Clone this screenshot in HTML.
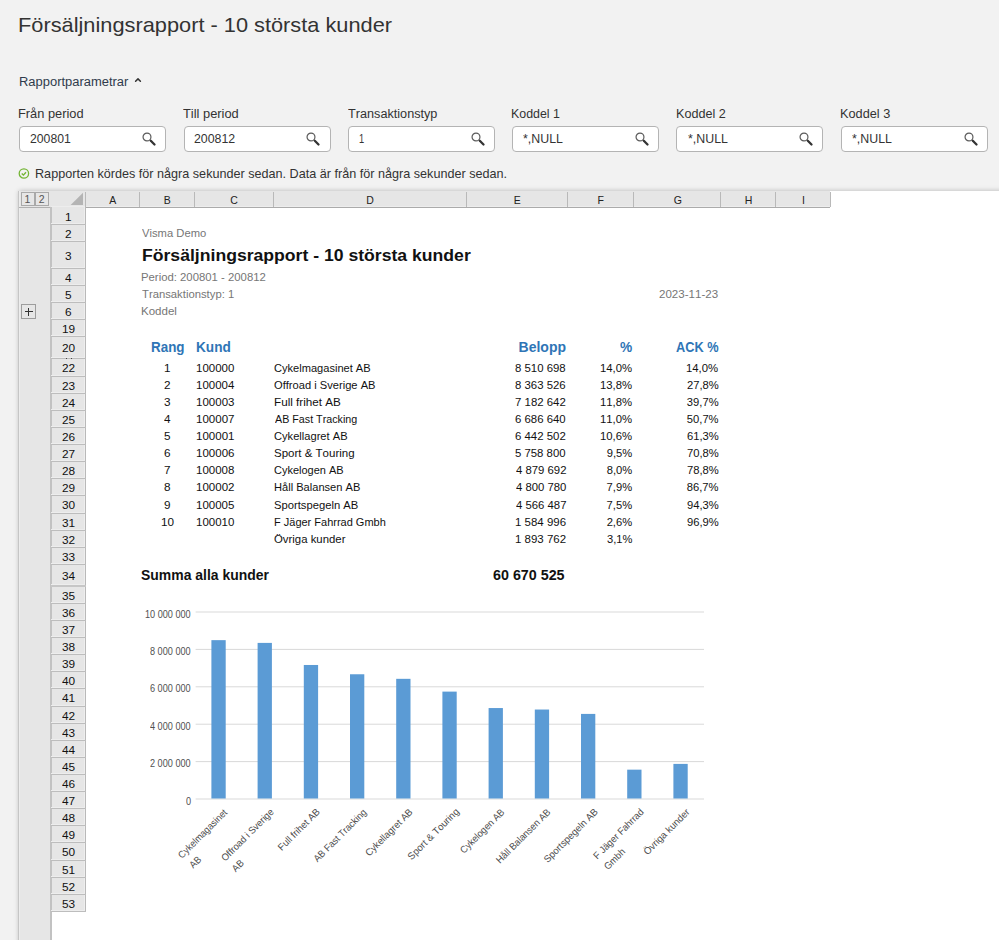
<!DOCTYPE html>
<html><head><meta charset="utf-8"><title>Försäljningsrapport</title>
<style>
html,body{margin:0;padding:0}
body{width:999px;height:940px;position:relative;overflow:hidden;background:#f2f2f2;font-family:"Liberation Sans",sans-serif;font-kerning:none}
.t{position:absolute;white-space:nowrap;line-height:0;transform-origin:0 0}
.r{position:absolute}
</style></head><body>
<div class="t" style="left:18.21px;top:25px;font-size:20.8px;color:#333;transform:scaleX(1.0473);">Försäljningsrapport - 10 största kunder</div>
<div class="t" style="left:18.64px;top:82px;font-size:12.5px;color:#2f3b4c;transform:scaleX(1.0357);">Rapportparametrar</div>
<svg class="r" style="left:133px;top:75px" width="12" height="10"><path d="M2.6 6.3 L5 3.9 L7.4 6.3" fill="none" stroke="#333" stroke-width="1.5" stroke-linecap="round" stroke-linejoin="round"/></svg>
<div class="t" style="left:18.25px;top:114px;font-size:12.5px;color:#333;transform:scaleX(1.0259);">Från period</div>
<div class="r" style="left:19.30px;top:126.00px;width:147.00px;height:25.50px;background:#fff;border:1px solid #b4b4b4;border-radius:4px;box-sizing:border-box;"></div>
<div class="t" style="left:29.98px;top:139px;font-size:12.6px;color:#333;transform:scaleX(0.9707);">200801</div>
<svg class="r" style="left:141.10px;top:130.90px" width="16" height="16"><circle cx="6" cy="6" r="3.95" fill="none" stroke="#5a5a5a" stroke-width="1.2"/><path d="M9.8 9.8 L13.5 13.5" stroke="#333" stroke-width="2.3" stroke-linecap="round"/></svg>
<div class="t" style="left:183.21px;top:114px;font-size:12.5px;color:#333;transform:scaleX(1.0282);">Till period</div>
<div class="r" style="left:183.58px;top:126.00px;width:147.00px;height:25.50px;background:#fff;border:1px solid #b4b4b4;border-radius:4px;box-sizing:border-box;"></div>
<div class="t" style="left:194.26px;top:139px;font-size:12.6px;color:#333;transform:scaleX(0.9809);">200812</div>
<svg class="r" style="left:305.38px;top:130.90px" width="16" height="16"><circle cx="6" cy="6" r="3.95" fill="none" stroke="#5a5a5a" stroke-width="1.2"/><path d="M9.8 9.8 L13.5 13.5" stroke="#333" stroke-width="2.3" stroke-linecap="round"/></svg>
<div class="t" style="left:347.92px;top:114px;font-size:12.5px;color:#333;transform:scaleX(1.0134);">Transaktionstyp</div>
<div class="r" style="left:347.86px;top:126.00px;width:147.00px;height:25.50px;background:#fff;border:1px solid #b4b4b4;border-radius:4px;box-sizing:border-box;"></div>
<div class="t" style="left:359.35px;top:139px;font-size:12.6px;color:#333;transform:scaleX(0.7363);">1</div>
<svg class="r" style="left:469.66px;top:130.90px" width="16" height="16"><circle cx="6" cy="6" r="3.95" fill="none" stroke="#5a5a5a" stroke-width="1.2"/><path d="M9.8 9.8 L13.5 13.5" stroke="#333" stroke-width="2.3" stroke-linecap="round"/></svg>
<div class="t" style="left:511.48px;top:114px;font-size:12.5px;color:#333;transform:scaleX(0.9914);">Koddel 1</div>
<div class="r" style="left:512.14px;top:126.00px;width:147.00px;height:25.50px;background:#fff;border:1px solid #b4b4b4;border-radius:4px;box-sizing:border-box;"></div>
<div class="t" style="left:523.24px;top:139px;font-size:12.6px;color:#333;transform:scaleX(0.9826);">*,NULL</div>
<svg class="r" style="left:633.94px;top:130.90px" width="16" height="16"><circle cx="6" cy="6" r="3.95" fill="none" stroke="#5a5a5a" stroke-width="1.2"/><path d="M9.8 9.8 L13.5 13.5" stroke="#333" stroke-width="2.3" stroke-linecap="round"/></svg>
<div class="t" style="left:675.67px;top:114px;font-size:12.5px;color:#333;transform:scaleX(1.0085);">Koddel 2</div>
<div class="r" style="left:676.42px;top:126.00px;width:147.00px;height:25.50px;background:#fff;border:1px solid #b4b4b4;border-radius:4px;box-sizing:border-box;"></div>
<div class="t" style="left:687.52px;top:139px;font-size:12.6px;color:#333;transform:scaleX(0.9826);">*,NULL</div>
<svg class="r" style="left:798.22px;top:130.90px" width="16" height="16"><circle cx="6" cy="6" r="3.95" fill="none" stroke="#5a5a5a" stroke-width="1.2"/><path d="M9.8 9.8 L13.5 13.5" stroke="#333" stroke-width="2.3" stroke-linecap="round"/></svg>
<div class="t" style="left:839.96px;top:114px;font-size:12.5px;color:#333;transform:scaleX(1.0173);">Koddel 3</div>
<div class="r" style="left:840.70px;top:126.00px;width:147.00px;height:25.50px;background:#fff;border:1px solid #b4b4b4;border-radius:4px;box-sizing:border-box;"></div>
<div class="t" style="left:851.80px;top:139px;font-size:12.6px;color:#333;transform:scaleX(0.9826);">*,NULL</div>
<svg class="r" style="left:962.50px;top:130.90px" width="16" height="16"><circle cx="6" cy="6" r="3.95" fill="none" stroke="#5a5a5a" stroke-width="1.2"/><path d="M9.8 9.8 L13.5 13.5" stroke="#333" stroke-width="2.3" stroke-linecap="round"/></svg>
<svg class="r" style="left:17px;top:167px" width="14" height="14"><circle cx="6.9" cy="6.5" r="4.7" fill="none" stroke="#74b535" stroke-width="1.3"/><path d="M4.7 6.6 L6.4 8.1 L9 5.2" fill="none" stroke="#74b535" stroke-width="1.4"/></svg>
<div class="t" style="left:35.26px;top:174px;font-size:12.8px;color:#333;transform:scaleX(0.9860);">Rapporten kördes för några sekunder sedan. Data är från för några sekunder sedan.</div>
<div class="r" style="left:19.00px;top:191.00px;width:991.00px;height:769.00px;background:#fff;box-shadow:0 0 5px rgba(0,0,0,0.25);"></div>
<div class="r" style="left:18.00px;top:191.00px;width:33.00px;height:769.00px;background:#e6e6e6;border-left:1px solid #c6c6c6;box-sizing:border-box;"></div>
<div class="r" style="left:19.00px;top:191.00px;width:1.00px;height:769.00px;background:#ededed;"></div>
<div class="r" style="left:20.50px;top:192.00px;width:14.00px;height:14.00px;background:#e6e6e6;border:1px solid #a9a9a9;box-sizing:border-box;"></div>
<div class="r" style="left:34.50px;top:192.00px;width:14.00px;height:14.00px;background:#e6e6e6;border:1px solid #a9a9a9;box-sizing:border-box;"></div>
<div class="t" style="left:24.54px;top:199px;font-size:10.5px;color:#555;">1</div>
<div class="t" style="left:38.68px;top:199px;font-size:10.5px;color:#555;">2</div>
<div class="r" style="left:19.00px;top:206.50px;width:32.00px;height:1.00px;background:#b0b0b0;"></div>
<div class="r" style="left:21.00px;top:304.00px;width:15.00px;height:15.00px;background:#e6e6e6;border:1px solid #9d9d9d;box-sizing:border-box;"></div>
<div class="r" style="left:24.50px;top:311.00px;width:8.00px;height:1.20px;background:#333;"></div>
<div class="r" style="left:27.90px;top:307.50px;width:1.20px;height:8.00px;background:#333;"></div>
<div class="r" style="left:51.00px;top:191.00px;width:779.00px;height:16.00px;background:#e6e6e6;"></div>
<div class="r" style="left:51.00px;top:206.00px;width:779.00px;height:1.00px;background:#ededed;"></div>
<div class="r" style="left:51.00px;top:207.00px;width:779.00px;height:1.00px;background:#ababab;"></div>
<div class="r" style="left:84.50px;top:192.00px;width:1.00px;height:15.00px;background:#b9b9b9;"></div>
<div class="r" style="left:139.00px;top:192.00px;width:1.00px;height:15.00px;background:#b9b9b9;"></div>
<div class="r" style="left:193.50px;top:192.00px;width:1.00px;height:15.00px;background:#b9b9b9;"></div>
<div class="r" style="left:272.50px;top:192.00px;width:1.00px;height:15.00px;background:#b9b9b9;"></div>
<div class="r" style="left:465.90px;top:192.00px;width:1.00px;height:15.00px;background:#b9b9b9;"></div>
<div class="r" style="left:566.90px;top:192.00px;width:1.00px;height:15.00px;background:#b9b9b9;"></div>
<div class="r" style="left:633.00px;top:192.00px;width:1.00px;height:15.00px;background:#b9b9b9;"></div>
<div class="r" style="left:720.00px;top:192.00px;width:1.00px;height:15.00px;background:#b9b9b9;"></div>
<div class="r" style="left:775.00px;top:192.00px;width:1.00px;height:15.00px;background:#b9b9b9;"></div>
<div class="r" style="left:829.50px;top:192.00px;width:1.00px;height:15.00px;background:#b9b9b9;"></div>
<svg class="r" style="left:70px;top:192px" width="14" height="14"><path d="M0.6 13.1 L13 0.7 L13 13.1 Z" fill="#b4b4b4"/></svg>
<div class="t" style="left:109.35px;top:200px;font-size:10.5px;color:#222;">A</div>
<div class="t" style="left:163.69px;top:200px;font-size:10.5px;color:#222;">B</div>
<div class="t" style="left:230.24px;top:200px;font-size:10.5px;color:#222;">C</div>
<div class="t" style="left:366.33px;top:200px;font-size:10.5px;color:#222;">D</div>
<div class="t" style="left:513.79px;top:200px;font-size:10.5px;color:#222;">E</div>
<div class="t" style="left:597.62px;top:200px;font-size:10.5px;color:#222;">F</div>
<div class="t" style="left:673.64px;top:200px;font-size:10.5px;color:#222;">G</div>
<div class="t" style="left:744.81px;top:200px;font-size:10.5px;color:#222;">H</div>
<div class="t" style="left:801.89px;top:200px;font-size:10.5px;color:#222;">I</div>
<div class="r" style="left:51.00px;top:207.00px;width:35.00px;height:705.00px;background:#e6e6e6;"></div>
<div class="r" style="left:50.00px;top:207.00px;width:1.50px;height:753.00px;background:#c2c2c2;"></div>
<div class="r" style="left:84.00px;top:207.00px;width:1.00px;height:705.00px;background:#eeeeee;"></div>
<div class="r" style="left:85.00px;top:207.00px;width:1.00px;height:705.00px;background:#b9b9b9;"></div>
<div class="r" style="left:51.00px;top:223.00px;width:34.00px;height:1.00px;background:#ededed;"></div>
<div class="r" style="left:51.00px;top:224.00px;width:35.00px;height:1.00px;background:#bdbdbd;"></div>
<div class="t" style="left:64.95px;top:217px;font-size:10.75px;color:#111;transform:scaleX(1.1000);">1</div>
<div class="r" style="left:51.00px;top:240.00px;width:34.00px;height:1.00px;background:#ededed;"></div>
<div class="r" style="left:51.00px;top:241.00px;width:35.00px;height:1.00px;background:#bdbdbd;"></div>
<div class="t" style="left:65.11px;top:234px;font-size:10.75px;color:#111;transform:scaleX(1.1000);">2</div>
<div class="r" style="left:51.00px;top:267.00px;width:34.00px;height:1.00px;background:#ededed;"></div>
<div class="r" style="left:51.00px;top:268.00px;width:35.00px;height:1.00px;background:#bdbdbd;"></div>
<div class="t" style="left:65.15px;top:256px;font-size:10.75px;color:#111;transform:scaleX(1.1000);">3</div>
<div class="r" style="left:51.00px;top:284.00px;width:34.00px;height:1.00px;background:#ededed;"></div>
<div class="r" style="left:51.00px;top:285.00px;width:35.00px;height:1.00px;background:#bdbdbd;"></div>
<div class="t" style="left:65.15px;top:278px;font-size:10.75px;color:#111;transform:scaleX(1.1000);">4</div>
<div class="r" style="left:51.00px;top:301.00px;width:34.00px;height:1.00px;background:#ededed;"></div>
<div class="r" style="left:51.00px;top:302.00px;width:35.00px;height:1.00px;background:#bdbdbd;"></div>
<div class="t" style="left:65.12px;top:295px;font-size:10.75px;color:#111;transform:scaleX(1.1000);">5</div>
<div class="r" style="left:51.00px;top:318.00px;width:34.00px;height:1.00px;background:#ededed;"></div>
<div class="r" style="left:51.00px;top:319.00px;width:35.00px;height:1.00px;background:#bdbdbd;"></div>
<div class="t" style="left:65.07px;top:312px;font-size:10.75px;color:#111;transform:scaleX(1.1000);">6</div>
<div class="r" style="left:51.00px;top:335.00px;width:34.00px;height:1.00px;background:#ededed;"></div>
<div class="r" style="left:51.00px;top:336.00px;width:35.00px;height:1.00px;background:#bdbdbd;"></div>
<div class="t" style="left:61.65px;top:329px;font-size:10.75px;color:#111;transform:scaleX(1.1000);">19</div>
<div class="r" style="left:51.00px;top:357.00px;width:34.00px;height:1.00px;background:#ededed;"></div>
<div class="r" style="left:51.00px;top:358.00px;width:35.00px;height:1.00px;background:#bdbdbd;"></div>
<div class="t" style="left:61.76px;top:348px;font-size:10.75px;color:#111;transform:scaleX(1.1000);">20</div>
<div class="r" style="left:51.00px;top:375.00px;width:34.00px;height:1.00px;background:#ededed;"></div>
<div class="r" style="left:51.00px;top:376.00px;width:35.00px;height:1.00px;background:#bdbdbd;"></div>
<div class="t" style="left:61.82px;top:368px;font-size:10.75px;color:#111;transform:scaleX(1.1000);">22</div>
<div class="r" style="left:51.00px;top:392.00px;width:34.00px;height:1.00px;background:#ededed;"></div>
<div class="r" style="left:51.00px;top:393.00px;width:35.00px;height:1.00px;background:#bdbdbd;"></div>
<div class="t" style="left:61.79px;top:386px;font-size:10.75px;color:#111;transform:scaleX(1.1000);">23</div>
<div class="r" style="left:51.00px;top:409.00px;width:34.00px;height:1.00px;background:#ededed;"></div>
<div class="r" style="left:51.00px;top:410.00px;width:35.00px;height:1.00px;background:#bdbdbd;"></div>
<div class="t" style="left:61.70px;top:403px;font-size:10.75px;color:#111;transform:scaleX(1.1000);">24</div>
<div class="r" style="left:51.00px;top:426.00px;width:34.00px;height:1.00px;background:#ededed;"></div>
<div class="r" style="left:51.00px;top:427.00px;width:35.00px;height:1.00px;background:#bdbdbd;"></div>
<div class="t" style="left:61.77px;top:420px;font-size:10.75px;color:#111;transform:scaleX(1.1000);">25</div>
<div class="r" style="left:51.00px;top:443.00px;width:34.00px;height:1.00px;background:#ededed;"></div>
<div class="r" style="left:51.00px;top:444.00px;width:35.00px;height:1.00px;background:#bdbdbd;"></div>
<div class="t" style="left:61.79px;top:437px;font-size:10.75px;color:#111;transform:scaleX(1.1000);">26</div>
<div class="r" style="left:51.00px;top:460.00px;width:34.00px;height:1.00px;background:#ededed;"></div>
<div class="r" style="left:51.00px;top:461.00px;width:35.00px;height:1.00px;background:#bdbdbd;"></div>
<div class="t" style="left:61.82px;top:454px;font-size:10.75px;color:#111;transform:scaleX(1.1000);">27</div>
<div class="r" style="left:51.00px;top:477.00px;width:34.00px;height:1.00px;background:#ededed;"></div>
<div class="r" style="left:51.00px;top:478.00px;width:35.00px;height:1.00px;background:#bdbdbd;"></div>
<div class="t" style="left:61.78px;top:471px;font-size:10.75px;color:#111;transform:scaleX(1.1000);">28</div>
<div class="r" style="left:51.00px;top:494.00px;width:34.00px;height:1.00px;background:#ededed;"></div>
<div class="r" style="left:51.00px;top:495.00px;width:35.00px;height:1.00px;background:#bdbdbd;"></div>
<div class="t" style="left:61.81px;top:488px;font-size:10.75px;color:#111;transform:scaleX(1.1000);">29</div>
<div class="r" style="left:51.00px;top:512.00px;width:34.00px;height:1.00px;background:#ededed;"></div>
<div class="r" style="left:51.00px;top:513.00px;width:35.00px;height:1.00px;background:#bdbdbd;"></div>
<div class="t" style="left:61.83px;top:505px;font-size:10.75px;color:#111;transform:scaleX(1.1000);">30</div>
<div class="r" style="left:51.00px;top:529.00px;width:34.00px;height:1.00px;background:#ededed;"></div>
<div class="r" style="left:51.00px;top:530.00px;width:35.00px;height:1.00px;background:#bdbdbd;"></div>
<div class="t" style="left:61.89px;top:523px;font-size:10.75px;color:#111;transform:scaleX(1.1000);">31</div>
<div class="r" style="left:51.00px;top:546.00px;width:34.00px;height:1.00px;background:#ededed;"></div>
<div class="r" style="left:51.00px;top:547.00px;width:35.00px;height:1.00px;background:#bdbdbd;"></div>
<div class="t" style="left:61.90px;top:540px;font-size:10.75px;color:#111;transform:scaleX(1.1000);">32</div>
<div class="r" style="left:51.00px;top:563.00px;width:34.00px;height:1.00px;background:#ededed;"></div>
<div class="r" style="left:51.00px;top:564.00px;width:35.00px;height:1.00px;background:#bdbdbd;"></div>
<div class="t" style="left:61.86px;top:557px;font-size:10.75px;color:#111;transform:scaleX(1.1000);">33</div>
<div class="r" style="left:51.00px;top:584.00px;width:34.00px;height:1.00px;background:#ededed;"></div>
<div class="r" style="left:51.00px;top:585.00px;width:35.00px;height:2.00px;background:#c6c6c6;"></div>
<div class="t" style="left:61.77px;top:576px;font-size:10.75px;color:#111;transform:scaleX(1.1000);">34</div>
<div class="r" style="left:51.00px;top:602.00px;width:34.00px;height:1.00px;background:#ededed;"></div>
<div class="r" style="left:51.00px;top:603.00px;width:35.00px;height:1.00px;background:#bdbdbd;"></div>
<div class="t" style="left:61.85px;top:596px;font-size:10.75px;color:#111;transform:scaleX(1.1000);">35</div>
<div class="r" style="left:51.00px;top:619.00px;width:34.00px;height:1.00px;background:#ededed;"></div>
<div class="r" style="left:51.00px;top:620.00px;width:35.00px;height:1.00px;background:#bdbdbd;"></div>
<div class="t" style="left:61.86px;top:613px;font-size:10.75px;color:#111;transform:scaleX(1.1000);">36</div>
<div class="r" style="left:51.00px;top:636.00px;width:34.00px;height:1.00px;background:#ededed;"></div>
<div class="r" style="left:51.00px;top:637.00px;width:35.00px;height:1.00px;background:#bdbdbd;"></div>
<div class="t" style="left:61.90px;top:630px;font-size:10.75px;color:#111;transform:scaleX(1.1000);">37</div>
<div class="r" style="left:51.00px;top:653.00px;width:34.00px;height:1.00px;background:#ededed;"></div>
<div class="r" style="left:51.00px;top:654.00px;width:35.00px;height:1.00px;background:#bdbdbd;"></div>
<div class="t" style="left:61.86px;top:647px;font-size:10.75px;color:#111;transform:scaleX(1.1000);">38</div>
<div class="r" style="left:51.00px;top:670.00px;width:34.00px;height:1.00px;background:#ededed;"></div>
<div class="r" style="left:51.00px;top:671.00px;width:35.00px;height:1.00px;background:#bdbdbd;"></div>
<div class="t" style="left:61.88px;top:664px;font-size:10.75px;color:#111;transform:scaleX(1.1000);">39</div>
<div class="r" style="left:51.00px;top:687.00px;width:34.00px;height:1.00px;background:#ededed;"></div>
<div class="r" style="left:51.00px;top:688.00px;width:35.00px;height:1.00px;background:#bdbdbd;"></div>
<div class="t" style="left:61.92px;top:681px;font-size:10.75px;color:#111;transform:scaleX(1.1000);">40</div>
<div class="r" style="left:51.00px;top:705.00px;width:34.00px;height:1.00px;background:#ededed;"></div>
<div class="r" style="left:51.00px;top:706.00px;width:35.00px;height:1.00px;background:#bdbdbd;"></div>
<div class="t" style="left:61.98px;top:698px;font-size:10.75px;color:#111;transform:scaleX(1.1000);">41</div>
<div class="r" style="left:51.00px;top:722.00px;width:34.00px;height:1.00px;background:#ededed;"></div>
<div class="r" style="left:51.00px;top:723.00px;width:35.00px;height:1.00px;background:#bdbdbd;"></div>
<div class="t" style="left:61.99px;top:716px;font-size:10.75px;color:#111;transform:scaleX(1.1000);">42</div>
<div class="r" style="left:51.00px;top:739.00px;width:34.00px;height:1.00px;background:#ededed;"></div>
<div class="r" style="left:51.00px;top:740.00px;width:35.00px;height:1.00px;background:#bdbdbd;"></div>
<div class="t" style="left:61.95px;top:733px;font-size:10.75px;color:#111;transform:scaleX(1.1000);">43</div>
<div class="r" style="left:51.00px;top:756.00px;width:34.00px;height:1.00px;background:#ededed;"></div>
<div class="r" style="left:51.00px;top:757.00px;width:35.00px;height:1.00px;background:#bdbdbd;"></div>
<div class="t" style="left:61.86px;top:750px;font-size:10.75px;color:#111;transform:scaleX(1.1000);">44</div>
<div class="r" style="left:51.00px;top:773.00px;width:34.00px;height:1.00px;background:#ededed;"></div>
<div class="r" style="left:51.00px;top:774.00px;width:35.00px;height:1.00px;background:#bdbdbd;"></div>
<div class="t" style="left:61.94px;top:767px;font-size:10.75px;color:#111;transform:scaleX(1.1000);">45</div>
<div class="r" style="left:51.00px;top:790.00px;width:34.00px;height:1.00px;background:#ededed;"></div>
<div class="r" style="left:51.00px;top:791.00px;width:35.00px;height:1.00px;background:#bdbdbd;"></div>
<div class="t" style="left:61.95px;top:784px;font-size:10.75px;color:#111;transform:scaleX(1.1000);">46</div>
<div class="r" style="left:51.00px;top:807.00px;width:34.00px;height:1.00px;background:#ededed;"></div>
<div class="r" style="left:51.00px;top:808.00px;width:35.00px;height:1.00px;background:#bdbdbd;"></div>
<div class="t" style="left:61.99px;top:801px;font-size:10.75px;color:#111;transform:scaleX(1.1000);">47</div>
<div class="r" style="left:51.00px;top:824.00px;width:34.00px;height:1.00px;background:#ededed;"></div>
<div class="r" style="left:51.00px;top:825.00px;width:35.00px;height:1.00px;background:#bdbdbd;"></div>
<div class="t" style="left:61.94px;top:818px;font-size:10.75px;color:#111;transform:scaleX(1.1000);">48</div>
<div class="r" style="left:51.00px;top:841.00px;width:34.00px;height:1.00px;background:#ededed;"></div>
<div class="r" style="left:51.00px;top:842.00px;width:35.00px;height:1.00px;background:#bdbdbd;"></div>
<div class="t" style="left:61.97px;top:835px;font-size:10.75px;color:#111;transform:scaleX(1.1000);">49</div>
<div class="r" style="left:51.00px;top:859.00px;width:34.00px;height:1.00px;background:#ededed;"></div>
<div class="r" style="left:51.00px;top:860.00px;width:35.00px;height:1.00px;background:#bdbdbd;"></div>
<div class="t" style="left:61.82px;top:852px;font-size:10.75px;color:#111;transform:scaleX(1.1000);">50</div>
<div class="r" style="left:51.00px;top:876.00px;width:34.00px;height:1.00px;background:#ededed;"></div>
<div class="r" style="left:51.00px;top:877.00px;width:35.00px;height:1.00px;background:#bdbdbd;"></div>
<div class="t" style="left:61.88px;top:870px;font-size:10.75px;color:#111;transform:scaleX(1.1000);">51</div>
<div class="r" style="left:51.00px;top:893.00px;width:34.00px;height:1.00px;background:#ededed;"></div>
<div class="r" style="left:51.00px;top:894.00px;width:35.00px;height:1.00px;background:#bdbdbd;"></div>
<div class="t" style="left:61.88px;top:887px;font-size:10.75px;color:#111;transform:scaleX(1.1000);">52</div>
<div class="r" style="left:51.00px;top:910.00px;width:34.00px;height:1.00px;background:#ededed;"></div>
<div class="r" style="left:51.00px;top:911.00px;width:35.00px;height:1.00px;background:#bdbdbd;"></div>
<div class="t" style="left:61.85px;top:904px;font-size:10.75px;color:#111;transform:scaleX(1.1000);">53</div>
<div class="r" style="left:65.90px;top:357.90px;width:1.20px;height:1.20px;background:#222;border-radius:50%;"></div>
<div class="r" style="left:71.00px;top:357.90px;width:1.20px;height:1.20px;background:#222;border-radius:50%;"></div>
<div class="t" style="left:141.55px;top:233px;font-size:11px;color:#767676;transform:scaleX(1.0200);">Visma Demo</div>
<div class="t" style="left:141.82px;top:256px;font-size:16.9px;color:#111;font-weight:bold;transform:scaleX(1.0425);">Försäljningsrapport - 10 största kunder</div>
<div class="t" style="left:140.97px;top:277px;font-size:11px;color:#767676;transform:scaleX(1.0306);">Period: 200801 - 200812</div>
<div class="t" style="left:141.65px;top:294px;font-size:11px;color:#767676;transform:scaleX(1.0259);">Transaktionstyp: 1</div>
<div class="t" style="left:140.95px;top:311px;font-size:11px;color:#767676;transform:scaleX(1.0487);">Koddel</div>
<div class="t" style="left:659.42px;top:294px;font-size:11px;color:#767676;transform:scaleX(1.0501);">2023-11-23</div>
<div class="t" style="left:150.90px;top:347px;font-size:14px;color:#2e75b6;font-weight:bold;transform:scaleX(0.9569);">Rang</div>
<div class="t" style="left:195.99px;top:347px;font-size:14px;color:#2e75b6;font-weight:bold;transform:scaleX(0.9733);">Kund</div>
<div class="t" style="left:518.56px;top:347px;font-size:14px;color:#2e75b6;font-weight:bold;">Belopp</div>
<div class="t" style="left:619.66px;top:347px;font-size:14px;color:#2e75b6;font-weight:bold;transform:scaleX(0.9804);">%</div>
<div class="t" style="left:675.68px;top:347px;font-size:14px;color:#2e75b6;font-weight:bold;transform:scaleX(0.9097);">ACK %</div>
<div class="t" style="left:164.07px;top:368px;font-size:11.2px;color:#111;transform:scaleX(1.0500);">1</div>
<div class="t" style="left:195.92px;top:368px;font-size:11.2px;color:#111;transform:scaleX(1.0282);">100000</div>
<div class="t" style="left:274.34px;top:368px;font-size:11.2px;color:#111;transform:scaleX(0.9899);">Cykelmagasinet AB</div>
<div class="t" style="left:515.40px;top:368px;font-size:11.2px;color:#111;transform:scaleX(1.0174);">8 510 698</div>
<div class="t" style="left:600.04px;top:368px;font-size:11.2px;color:#111;transform:scaleX(1.0130);">14,0%</div>
<div class="t" style="left:686.44px;top:368px;font-size:11.2px;color:#111;transform:scaleX(1.0130);">14,0%</div>
<div class="t" style="left:164.23px;top:385px;font-size:11.2px;color:#111;transform:scaleX(1.0500);">2</div>
<div class="t" style="left:195.93px;top:385px;font-size:11.2px;color:#111;transform:scaleX(1.0251);">100004</div>
<div class="t" style="left:274.37px;top:385px;font-size:11.2px;color:#111;transform:scaleX(0.9953);">Offroad i Sverige AB</div>
<div class="t" style="left:515.40px;top:385px;font-size:11.2px;color:#111;transform:scaleX(1.0175);">8 363 526</div>
<div class="t" style="left:600.04px;top:385px;font-size:11.2px;color:#111;transform:scaleX(1.0130);">13,8%</div>
<div class="t" style="left:686.73px;top:385px;font-size:11.2px;color:#111;transform:scaleX(1.0034);">27,8%</div>
<div class="t" style="left:164.26px;top:402px;font-size:11.2px;color:#111;transform:scaleX(1.0500);">3</div>
<div class="t" style="left:195.92px;top:402px;font-size:11.2px;color:#111;transform:scaleX(1.0298);">100003</div>
<div class="t" style="left:273.94px;top:402px;font-size:11.2px;color:#111;transform:scaleX(1.0447);">Full frihet AB</div>
<div class="t" style="left:515.31px;top:402px;font-size:11.2px;color:#111;transform:scaleX(1.0208);">7 182 642</div>
<div class="t" style="left:600.04px;top:402px;font-size:11.2px;color:#111;transform:scaleX(1.0130);">11,8%</div>
<div class="t" style="left:686.87px;top:402px;font-size:11.2px;color:#111;">39,7%</div>
<div class="t" style="left:164.27px;top:419px;font-size:11.2px;color:#111;transform:scaleX(1.0500);">4</div>
<div class="t" style="left:195.92px;top:419px;font-size:11.2px;color:#111;transform:scaleX(1.0318);">100007</div>
<div class="t" style="left:274.88px;top:419px;font-size:11.2px;color:#111;transform:scaleX(0.9583);">AB Fast Tracking</div>
<div class="t" style="left:515.32px;top:419px;font-size:11.2px;color:#111;transform:scaleX(1.0180);">6 686 640</div>
<div class="t" style="left:600.04px;top:419px;font-size:11.2px;color:#111;transform:scaleX(1.0130);">11,0%</div>
<div class="t" style="left:686.85px;top:419px;font-size:11.2px;color:#111;">50,7%</div>
<div class="t" style="left:164.24px;top:436px;font-size:11.2px;color:#111;transform:scaleX(1.0500);">5</div>
<div class="t" style="left:195.92px;top:436px;font-size:11.2px;color:#111;transform:scaleX(1.0313);">100001</div>
<div class="t" style="left:274.33px;top:436px;font-size:11.2px;color:#111;transform:scaleX(0.9943);">Cykellagret AB</div>
<div class="t" style="left:515.32px;top:436px;font-size:11.2px;color:#111;transform:scaleX(1.0207);">6 442 502</div>
<div class="t" style="left:600.04px;top:436px;font-size:11.2px;color:#111;transform:scaleX(1.0130);">10,6%</div>
<div class="t" style="left:686.73px;top:436px;font-size:11.2px;color:#111;transform:scaleX(1.0036);">61,3%</div>
<div class="t" style="left:164.19px;top:453px;font-size:11.2px;color:#111;transform:scaleX(1.0500);">6</div>
<div class="t" style="left:195.92px;top:453px;font-size:11.2px;color:#111;transform:scaleX(1.0298);">100006</div>
<div class="t" style="left:274.38px;top:453px;font-size:11.2px;color:#111;transform:scaleX(1.0284);">Sport &amp; Touring</div>
<div class="t" style="left:515.44px;top:453px;font-size:11.2px;color:#111;transform:scaleX(1.0155);">5 758 800</div>
<div class="t" style="left:606.68px;top:453px;font-size:11.2px;color:#111;">9,5%</div>
<div class="t" style="left:686.72px;top:453px;font-size:11.2px;color:#111;transform:scaleX(1.0038);">70,8%</div>
<div class="t" style="left:164.22px;top:470px;font-size:11.2px;color:#111;transform:scaleX(1.0500);">7</div>
<div class="t" style="left:195.92px;top:470px;font-size:11.2px;color:#111;transform:scaleX(1.0296);">100008</div>
<div class="t" style="left:274.34px;top:470px;font-size:11.2px;color:#111;transform:scaleX(0.9826);">Cykelogen AB</div>
<div class="t" style="left:515.64px;top:470px;font-size:11.2px;color:#111;transform:scaleX(1.0142);">4 879 692</div>
<div class="t" style="left:606.71px;top:470px;font-size:11.2px;color:#111;">8,0%</div>
<div class="t" style="left:686.72px;top:470px;font-size:11.2px;color:#111;transform:scaleX(1.0038);">78,8%</div>
<div class="t" style="left:164.23px;top:487px;font-size:11.2px;color:#111;transform:scaleX(1.0500);">8</div>
<div class="t" style="left:195.92px;top:487px;font-size:11.2px;color:#111;transform:scaleX(1.0318);">100002</div>
<div class="t" style="left:273.99px;top:487px;font-size:11.2px;color:#111;transform:scaleX(0.9912);">Håll Balansen AB</div>
<div class="t" style="left:515.64px;top:487px;font-size:11.2px;color:#111;transform:scaleX(1.0116);">4 800 780</div>
<div class="t" style="left:606.62px;top:487px;font-size:11.2px;color:#111;">7,9%</div>
<div class="t" style="left:686.81px;top:487px;font-size:11.2px;color:#111;">86,7%</div>
<div class="t" style="left:164.23px;top:505px;font-size:11.2px;color:#111;transform:scaleX(1.0500);">9</div>
<div class="t" style="left:195.92px;top:505px;font-size:11.2px;color:#111;transform:scaleX(1.0291);">100005</div>
<div class="t" style="left:274.39px;top:505px;font-size:11.2px;color:#111;transform:scaleX(1.0042);">Sportspegeln AB</div>
<div class="t" style="left:515.64px;top:505px;font-size:11.2px;color:#111;transform:scaleX(1.0142);">4 566 487</div>
<div class="t" style="left:606.62px;top:505px;font-size:11.2px;color:#111;">7,5%</div>
<div class="t" style="left:686.77px;top:505px;font-size:11.2px;color:#111;transform:scaleX(1.0022);">94,3%</div>
<div class="t" style="left:160.74px;top:522px;font-size:11.2px;color:#111;transform:scaleX(1.0500);">10</div>
<div class="t" style="left:195.92px;top:522px;font-size:11.2px;color:#111;transform:scaleX(1.0282);">100010</div>
<div class="t" style="left:274.00px;top:522px;font-size:11.2px;color:#111;transform:scaleX(0.9825);">F Jäger Fahrrad Gmbh</div>
<div class="t" style="left:515.03px;top:522px;font-size:11.2px;color:#111;transform:scaleX(1.0252);">1 584 996</div>
<div class="t" style="left:606.64px;top:522px;font-size:11.2px;color:#111;">2,6%</div>
<div class="t" style="left:686.77px;top:522px;font-size:11.2px;color:#111;transform:scaleX(1.0022);">96,9%</div>
<div class="t" style="left:274.36px;top:539px;font-size:11.2px;color:#111;transform:scaleX(1.0168);">Övriga kunder</div>
<div class="t" style="left:515.02px;top:539px;font-size:11.2px;color:#111;transform:scaleX(1.0267);">1 893 762</div>
<div class="t" style="left:606.78px;top:539px;font-size:11.2px;color:#111;transform:scaleX(0.9959);">3,1%</div>
<div class="t" style="left:140.80px;top:575px;font-size:14.4px;color:#111;font-weight:bold;transform:scaleX(0.9695);">Summa alla kunder</div>
<div class="t" style="left:493.48px;top:575px;font-size:14.4px;color:#111;font-weight:bold;transform:scaleX(0.9938);">60 670 525</div>
<svg class="r" style="left:0;top:0" width="999" height="940"><rect x="195.6" y="798.50" width="508.4" height="1" fill="#d9d9d9"/><rect x="195.6" y="761.10" width="508.4" height="1" fill="#d9d9d9"/><rect x="195.6" y="723.70" width="508.4" height="1" fill="#d9d9d9"/><rect x="195.6" y="686.30" width="508.4" height="1" fill="#d9d9d9"/><rect x="195.6" y="648.90" width="508.4" height="1" fill="#d9d9d9"/><rect x="195.6" y="611.50" width="508.4" height="1" fill="#d9d9d9"/><rect x="211.40" y="640.15" width="14.3" height="158.35" fill="#5b9bd5"/><rect x="257.60" y="642.90" width="14.3" height="155.60" fill="#5b9bd5"/><rect x="303.80" y="664.98" width="14.3" height="133.52" fill="#5b9bd5"/><rect x="350.00" y="674.26" width="14.3" height="124.24" fill="#5b9bd5"/><rect x="396.20" y="678.83" width="14.3" height="119.67" fill="#5b9bd5"/><rect x="442.40" y="691.61" width="14.3" height="106.89" fill="#5b9bd5"/><rect x="488.60" y="708.05" width="14.3" height="90.45" fill="#5b9bd5"/><rect x="534.80" y="709.53" width="14.3" height="88.97" fill="#5b9bd5"/><rect x="581.00" y="713.91" width="14.3" height="84.59" fill="#5b9bd5"/><rect x="627.20" y="769.66" width="14.3" height="28.84" fill="#5b9bd5"/><rect x="673.40" y="763.89" width="14.3" height="34.61" fill="#5b9bd5"/></svg>
<div class="t" style="left:185.97px;top:802px;font-size:10.2px;color:#505050;transform:scaleX(0.8960);">0</div>
<div class="t" style="left:150.40px;top:764px;font-size:10.2px;color:#505050;transform:scaleX(0.8960);">2 000 000</div>
<div class="t" style="left:150.40px;top:727px;font-size:10.2px;color:#505050;transform:scaleX(0.8960);">4 000 000</div>
<div class="t" style="left:150.40px;top:689px;font-size:10.2px;color:#505050;transform:scaleX(0.8960);">6 000 000</div>
<div class="t" style="left:150.40px;top:652px;font-size:10.2px;color:#505050;transform:scaleX(0.8960);">8 000 000</div>
<div class="t" style="left:145.32px;top:615px;font-size:10.2px;color:#505050;transform:scaleX(0.8960);">10 000 000</div>
<div class="r" style="left:228.05px;top:813.00px;width:0;height:0;transform:rotate(-45deg);transform-origin:0 0"><div class="t" style="left:-64.76px;top:-3px;font-size:9.8px;color:#4d4d4d;transform:scaleX(0.9299)">Cykelmagasinet</div><div class="t" style="left:-64.32px;top:12px;font-size:9.8px;color:#4d4d4d;transform:scaleX(0.9299)">AB</div></div>
<div class="r" style="left:274.25px;top:813.00px;width:0;height:0;transform:rotate(-45deg);transform-origin:0 0"><div class="t" style="left:-69.14px;top:-3px;font-size:9.8px;color:#4d4d4d;transform:scaleX(0.9458)">Offroad i Sverige</div><div class="t" style="left:-68.72px;top:12px;font-size:9.8px;color:#4d4d4d;transform:scaleX(0.9458)">AB</div></div>
<div class="r" style="left:320.45px;top:813.00px;width:0;height:0;transform:rotate(-45deg);transform-origin:0 0"><div class="t" style="left:-54.18px;top:-3px;font-size:9.8px;color:#4d4d4d;transform:scaleX(0.9749)">Full frihet AB</div></div>
<div class="r" style="left:366.65px;top:813.00px;width:0;height:0;transform:rotate(-45deg);transform-origin:0 0"><div class="t" style="left:-69.72px;top:-3px;font-size:9.8px;color:#4d4d4d;transform:scaleX(0.9355)">AB Fast Tracking</div></div>
<div class="r" style="left:412.85px;top:813.00px;width:0;height:0;transform:rotate(-45deg);transform-origin:0 0"><div class="t" style="left:-61.98px;top:-3px;font-size:9.8px;color:#4d4d4d;transform:scaleX(0.9639)">Cykellagret AB</div></div>
<div class="r" style="left:459.05px;top:813.00px;width:0;height:0;transform:rotate(-45deg);transform-origin:0 0"><div class="t" style="left:-67.44px;top:-3px;font-size:9.8px;color:#4d4d4d;transform:scaleX(0.9918)">Sport &amp; Touring</div></div>
<div class="r" style="left:505.25px;top:813.00px;width:0;height:0;transform:rotate(-45deg);transform-origin:0 0"><div class="t" style="left:-57.67px;top:-3px;font-size:9.8px;color:#4d4d4d;transform:scaleX(0.9364)">Cykelogen AB</div></div>
<div class="r" style="left:551.45px;top:813.00px;width:0;height:0;transform:rotate(-45deg);transform-origin:0 0"><div class="t" style="left:-71.76px;top:-3px;font-size:9.8px;color:#4d4d4d;transform:scaleX(0.9474)">Håll Balansen AB</div></div>
<div class="r" style="left:597.65px;top:813.00px;width:0;height:0;transform:rotate(-45deg);transform-origin:0 0"><div class="t" style="left:-71.13px;top:-3px;font-size:9.8px;color:#4d4d4d;transform:scaleX(0.9740)">Sportspegeln AB</div></div>
<div class="r" style="left:643.85px;top:813.00px;width:0;height:0;transform:rotate(-45deg);transform-origin:0 0"><div class="t" style="left:-65.96px;top:-3px;font-size:9.8px;color:#4d4d4d;transform:scaleX(0.9473)">F Jäger Fahrrad</div><div class="t" style="left:-65.67px;top:12px;font-size:9.8px;color:#4d4d4d;transform:scaleX(0.9473)">Gmbh</div></div>
<div class="r" style="left:690.05px;top:813.00px;width:0;height:0;transform:rotate(-45deg);transform-origin:0 0"><div class="t" style="left:-60.36px;top:-3px;font-size:9.8px;color:#4d4d4d;transform:scaleX(0.9832)">Övriga kunder</div></div>
</body></html>
